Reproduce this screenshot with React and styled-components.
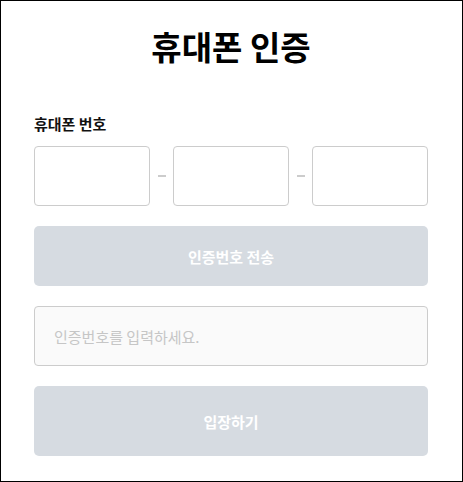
import React from 'react';
import styled, { createGlobalStyle } from 'styled-components';

const GlobalStyle = createGlobalStyle`
body {
    margin: 0;
    font-family: "Noto Sans CJK KR", "Noto Sans", sans-serif;
}
`;

const Wrapper = styled.div`
width: 463px;
height: 482px;
box-sizing: border-box;
border: 1px solid #000;
padding: 25px 34px 0 33px;
display: flex;
flex-direction: column;
background: white;
`;

const Title = styled.h1`
margin: 0 0 47px;
font-size: 33px;
line-height: 41px;
font-weight: 700;
text-align: center;
color: #000;
`;

const Label = styled.div`
font-size: 15px;
line-height: 20px;
font-weight: 700;
color: #111;
margin-bottom: 12px;
`;

const PhoneRow = styled.div`
display: flex;
align-items: center;
justify-content: space-between;
margin-bottom: 20px;
`;

const PhoneInput = styled.input`
width: 116px;
height: 60px;
box-sizing: border-box;
border: 1px solid #cccccc;
border-radius: 4px;
background: white;
outline: none;
padding: 0 12px;
font-size: 15px;
font-family: inherit;
`;

const Dash = styled.span`
width: 8px;
height: 2px;
background: #cccccc;
`;

const SubmitButton = styled.button`
width: 100%;
height: ${props => props.tall ? '70px' : '60px'};
box-sizing: border-box;
border: none;
border-radius: 5px;
background: #d6dbe1;
color: #fff;
font-family: inherit;
font-size: 15px;
font-weight: 700;
margin-bottom: 20px;
`;

const CodeInput = styled.input`
width: 100%;
height: 60px;
box-sizing: border-box;
border: 1px solid #cccccc;
border-radius: 4px;
background: #fafafa;
outline: none;
padding: 0 19px;
font-family: inherit;
font-size: 15px;
margin-bottom: 20px;

&::placeholder {
    color: #c6c6c6;
}
`;

const App = () => {
    return (
        <>
        <GlobalStyle />
        <Wrapper>
            <Title>휴대폰 인증</Title>
            <Label>휴대폰 번호</Label>
            <PhoneRow>
                <PhoneInput />
                <Dash />
                <PhoneInput />
                <Dash />
                <PhoneInput />
            </PhoneRow>
            <SubmitButton disabled>인증번호 전송</SubmitButton>
            <CodeInput placeholder="인증번호를 입력하세요." />
            <SubmitButton tall disabled>입장하기</SubmitButton>
        </Wrapper>
        </>
    )
}

export default App;
